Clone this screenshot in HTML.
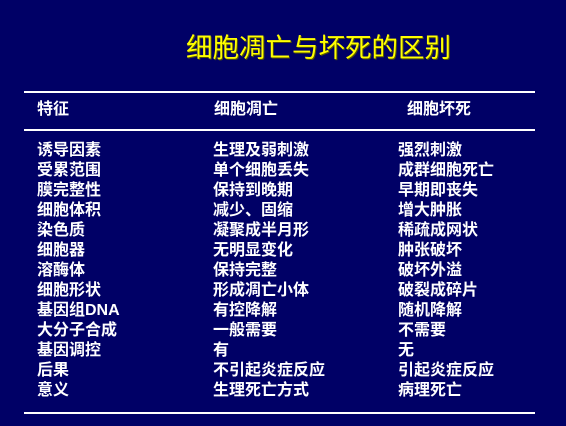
<!DOCTYPE html>
<html><head><meta charset="utf-8"><style>
html,body{margin:0;padding:0}
body{width:566px;height:426px;background:#000066;position:relative;overflow:hidden;font-family:"Liberation Sans","Noto Sans CJK SC",sans-serif}
.t{position:absolute;left:186px;top:26px;font-size:26.5px;color:#ffff00;white-space:nowrap;text-shadow:1px 1px 0 #555500}
.l{position:absolute;left:24px;width:511px;height:2px;background:#fff}
.c{position:absolute;color:#fff;font-weight:bold;font-size:16px;line-height:20px;white-space:pre}
</style></head><body>
<div class="t">细胞凋亡与坏死的区别</div>
<div class="l" style="top:91px"></div>
<div class="l" style="top:129px"></div>
<div class="l" style="top:412px"></div>
<div class="c" style="left:37px;top:100px">特征</div>
<div class="c" style="left:214px;top:100px">细胞凋亡</div>
<div class="c" style="left:407px;top:100px">细胞坏死</div>
<div class="c" style="left:37px;top:141px">诱导因素
受累范围
膜完整性
细胞体积
染色质
细胞器
溶酶体
细胞形状
基因组DNA
大分子合成
基因调控
后果
意义</div>
<div class="c" style="left:213px;top:141px">生理及弱刺激
单个细胞丢失
保持到晚期
减少、固缩
凝聚成半月形
无明显变化
保持完整
形成凋亡小体
有控降解
一般需要
有
不引起炎症反应
生理死亡方式</div>
<div class="c" style="left:398px;top:141px">强烈刺激
成群细胞死亡
早期即丧失
增大肿胀
稀疏成网状
肿张破坏
破坏外溢
破裂成碎片
随机降解
不需要
无
引起炎症反应
病理死亡</div>
</body></html>
